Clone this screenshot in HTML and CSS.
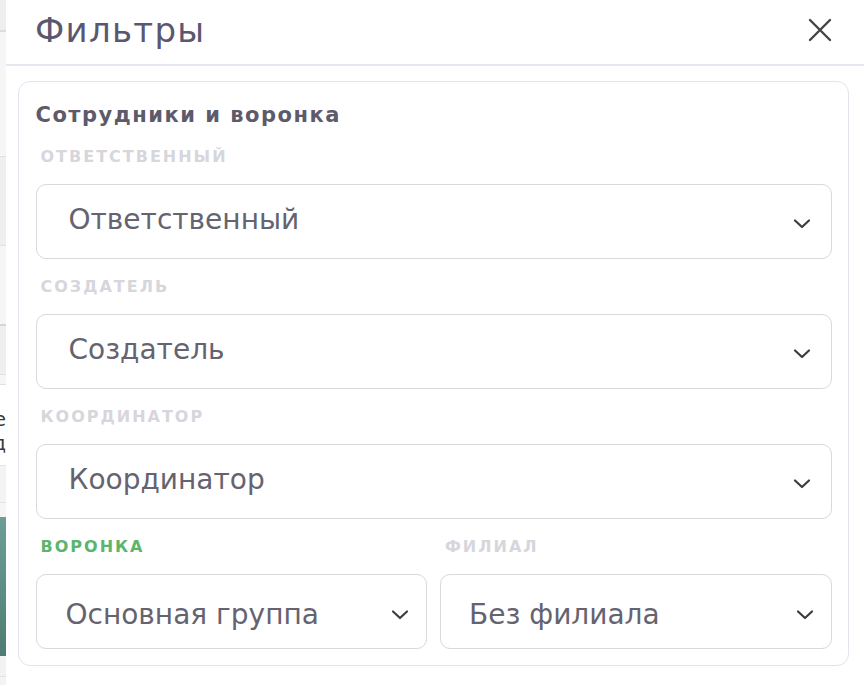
FILE: index.html
```html
<!DOCTYPE html>
<html lang="ru">
<head>
<meta charset="utf-8">
<title>Фильтры</title>
<link rel="stylesheet" href="styles.css">
</head>
<body>
<div class="screen">
  <div class="backdrop">
    <div class="seg s1"></div>
    <div class="seg s2"></div>
    <div class="seg s3"></div>
    <div class="seg s4"></div>
    <div class="seg s5"></div>
    <div class="seg s6"></div>
    <div class="seg s7"><span class="frag f1">Поле</span><span class="frag f2">Код</span></div>
    <div class="seg s8"></div>
    <div class="seg s9"></div>
    <div class="seg s10"></div>
    <div class="seg s11"></div>
    <div class="seg s12"></div>
  </div>
  <div class="panel">
    <header class="panel-header">
      <h1 class="panel-title">Фильтры</h1>
      <button class="close" aria-label="Закрыть">
        <svg width="24" height="24" viewBox="0 0 24 24"><path d="M2 2 L22 22 M22 2 L2 22" stroke="#454545" stroke-width="2.4" stroke-linecap="round" fill="none"/></svg>
      </button>
    </header>
    <section class="card">
      <h2 class="card-title">Сотрудники и воронка</h2>
      <div class="field">
        <div class="label">Ответственный</div>
        <div class="select"><span class="value">Ответственный</span><svg class="chev" width="18" height="11" viewBox="0 0 18 11"><path d="M2 2.5 L9 9 L16 2.5" stroke="#3c3c3c" stroke-width="2.2" stroke-linecap="round" stroke-linejoin="round" fill="none"/></svg></div>
      </div>
      <div class="field">
        <div class="label">Создатель</div>
        <div class="select"><span class="value">Создатель</span><svg class="chev" width="18" height="11" viewBox="0 0 18 11"><path d="M2 2.5 L9 9 L16 2.5" stroke="#3c3c3c" stroke-width="2.2" stroke-linecap="round" stroke-linejoin="round" fill="none"/></svg></div>
      </div>
      <div class="field">
        <div class="label">Координатор</div>
        <div class="select"><span class="value">Координатор</span><svg class="chev" width="18" height="11" viewBox="0 0 18 11"><path d="M2 2.5 L9 9 L16 2.5" stroke="#3c3c3c" stroke-width="2.2" stroke-linecap="round" stroke-linejoin="round" fill="none"/></svg></div>
      </div>
      <div class="row">
        <div class="field">
          <div class="label active">Воронка</div>
          <div class="select half left"><span class="value">Основная группа</span><svg class="chev" width="18" height="11" viewBox="0 0 18 11"><path d="M2 2.5 L9 9 L16 2.5" stroke="#3c3c3c" stroke-width="2.2" stroke-linecap="round" stroke-linejoin="round" fill="none"/></svg></div>
        </div>
        <div class="field">
          <div class="label">Филиал</div>
          <div class="select half right"><span class="value">Без филиала</span><svg class="chev" width="18" height="11" viewBox="0 0 18 11"><path d="M2 2.5 L9 9 L16 2.5" stroke="#3c3c3c" stroke-width="2.2" stroke-linecap="round" stroke-linejoin="round" fill="none"/></svg></div>
        </div>
      </div>
    </section>
  </div>
</div>
</body>
</html>
```
FILE: styles.css
```css
* { box-sizing: border-box; }
html, body { margin: 0; padding: 0; }
body {
  width: 864px;
  height: 686px;
  overflow: hidden;
  background: #fff;
  font-family: "DejaVu Sans", "Open Sans", sans-serif;
}
.screen { display: flex; height: 686px; }

.backdrop {
  width: 6px;
  flex: none;
  display: flex;
  flex-direction: column;
  overflow: hidden;
}
.seg { flex: none; position: relative; overflow: hidden; }
.s1 { background: #efefef; border-bottom: 2px solid #dcdcdc; height: 32px; }
.s2 { height: 125px; background: #f6f6f6; border-bottom: 1px solid #e0e0e0; }
.s3 { height: 89px; background: #efefef; border-bottom: 1px solid #e0e0e0; }
.s4 { height: 80px; background: #f6f6f6; border-bottom: 2px solid #d6d6d6; }
.s5 { height: 49px; background: #efefef; border-bottom: 1px solid #e2e2e2; }
.s6 { height: 10px; background: #f6f6f6; border-bottom: 1px solid #e2e2e2; }
.s7 { height: 81px; background: #ffffff; border-bottom: 1px solid #e4e4e4; }
.s8 { height: 37px; background: #f3f3f3; border-bottom: 1px solid #e4e4e4; }
.s9 { height: 14px; background: #f6f6f6; }
.s10 { height: 139px; background: linear-gradient(180deg, #6d9d94 0%, #5a8a81 60%, #4e7b73 100%); }
.s11 { height: 21px; background: #f2f2f2; border-bottom: 1px solid #e2e2e2; }
.s12 { height: 8px; background: #f4f4f4; }
.frag {
  position: absolute;
  right: 0;
  font-size: 20px;
  color: #3a3a3a;
  white-space: nowrap;
  line-height: 24px;
}
.f1 { top: 22px; }
.f2 { top: 46px; }

.panel {
  flex: 1;
  background: #fff;
  display: flex;
  flex-direction: column;
}
.panel-header {
  height: 66px;
  flex: none;
  display: flex;
  align-items: center;
  justify-content: space-between;
  padding: 0 32px 0 29px;
  border-bottom: 2px solid #e4e7f0;
}
.panel-title {
  margin: 0;
  font-size: 34px;
  font-weight: 500;
  letter-spacing: 1.3px;
  color: #5a5870;
  line-height: 40px;
  padding-bottom: 4px;
}
.close {
  border: 0;
  background: none;
  padding: 0;
  width: 24px;
  height: 24px;
  display: flex;
  margin-bottom: 4px;
}

.card {
  margin: 15px 15px 0 12px;
  border: 1.5px solid #e1e4ee;
  border-radius: 12px;
  padding: 20px 16.5px 16px 16.5px;
}
.card-title {
  margin: 0;
  font-size: 21px;
  line-height: 26px;
  font-weight: 700;
  letter-spacing: 1.5px;
  color: #5d5a6b;
}
.field { display: flex; flex-direction: column; }
.label {
  margin-top: 19px;
  margin-bottom: 18px;
  padding-left: 5px;
  font-size: 16px;
  line-height: 18px;
  font-weight: 700;
  letter-spacing: 2px;
  text-transform: uppercase;
  color: #d6d6dc;
}
.card-title + .field .label { margin-top: 20px; }
.label.active { color: #5cb56d; }
.select {
  height: 75px;
  border: 1.5px solid #d8d8dd;
  border-radius: 10px;
  display: flex;
  align-items: center;
  justify-content: space-between;
  padding: 0 20px 4px 32px;
}
.select.half { padding: 6px 17px 0 29px; }
.select.half.right { padding-left: 28px; }
.value {
  font-size: 28px;
  color: #65636f;
  white-space: nowrap;
}
.chev { flex: none; margin-top: 8px; }
.select.half .chev { margin-top: 0; }
.row {
  display: grid;
  grid-template-columns: 1fr 1fr;
  column-gap: 13px;
}
```
